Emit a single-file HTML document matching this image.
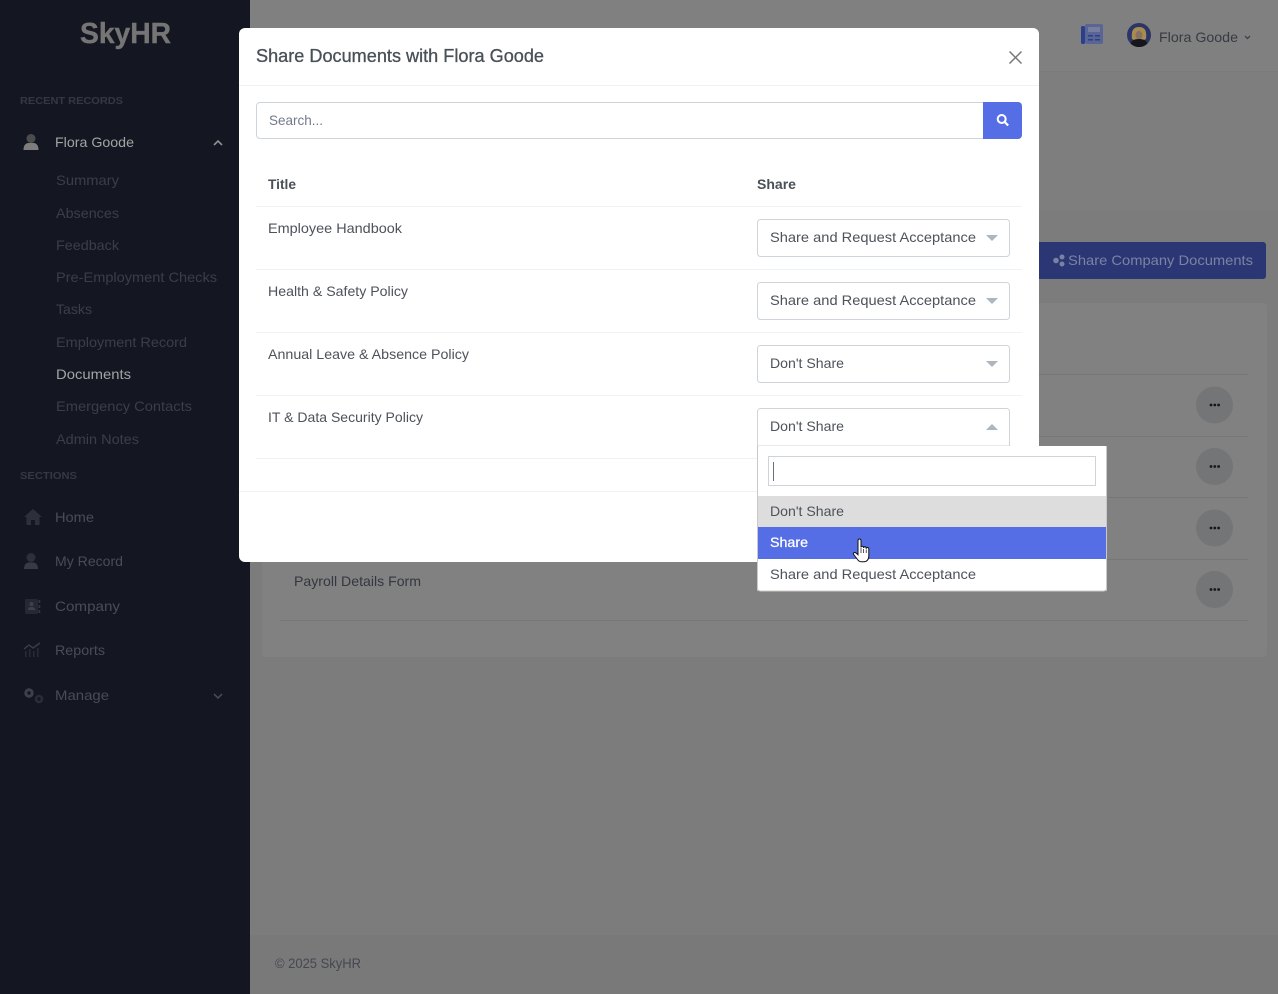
<!DOCTYPE html>
<html lang="en"><head><meta charset="utf-8"><title>Share Documents</title>
<style>
html,body{margin:0;padding:0;background:#7c7c7c;overflow:hidden}
svg{display:block}
text{font-family:"Liberation Sans",sans-serif;font-size:14px;white-space:pre}
.s{fill:#3b3e4a;font-size:14px}
.m{fill:#4a4c55;font-size:14px}
.h{fill:#353843;font-size:10.5px;font-weight:700}
.d{fill:#4d525b;font-size:14px}
.b{fill:#495057;font-size:14px;font-weight:700}
</style></head><body>
<svg xmlns="http://www.w3.org/2000/svg" width="1278" height="994" viewBox="0 0 1278 994">
<!-- page -->
<rect width="1278" height="994" fill="#7c7c7c"/>
<rect x="250" y="0" width="1028" height="71" fill="#808080"/>
<rect x="250" y="71" width="1028" height="1" fill="#7b7b7b"/>
<rect x="250" y="72" width="1028" height="138" fill="#7e7e7e"/>
<rect x="262" y="303" width="1005" height="354" rx="4" fill="#818181"/>
<g fill="#777"><rect x="280" y="374" width="968" height="1"/><rect x="280" y="436" width="968" height="1"/><rect x="280" y="497" width="968" height="1"/><rect x="280" y="559" width="968" height="1"/><rect x="280" y="620" width="968" height="1"/></g>
<rect x="250" y="935" width="1028" height="59" fill="#797979"/>
<text x="294" y="586" textLength="127" lengthAdjust="spacingAndGlyphs" style="fill:#33373f">Payroll Details Form</text>
<g fill="#747577"><circle cx="1214.500" cy="405" r="18.5"/><circle cx="1214.500" cy="466.500" r="18.5"/><circle cx="1214.500" cy="528" r="18.5"/><circle cx="1214.500" cy="589.500" r="18.5"/></g>
<g fill="#15171f"><circle cx="1211" cy="405" r="1.400"/><circle cx="1214.800" cy="405" r="1.400"/><circle cx="1218.600" cy="405" r="1.400"/><circle cx="1211" cy="466.500" r="1.400"/><circle cx="1214.800" cy="466.500" r="1.400"/><circle cx="1218.600" cy="466.500" r="1.400"/><circle cx="1211" cy="528" r="1.400"/><circle cx="1214.800" cy="528" r="1.400"/><circle cx="1218.600" cy="528" r="1.400"/><circle cx="1211" cy="589.500" r="1.400"/><circle cx="1214.800" cy="589.500" r="1.400"/><circle cx="1218.600" cy="589.500" r="1.400"/></g>
<text x="275" y="968" textLength="86" lengthAdjust="spacingAndGlyphs" style="fill:#454851">© 2025 SkyHR</text>
<!-- top bar -->
<rect x="1081" y="26" width="4" height="18" rx="1.500" fill="#2b3f8c"/>
<rect x="1085" y="24" width="18" height="20" rx="2" fill="#586595"/>
<rect x="1088" y="27" width="12" height="5" fill="#767e9e"/>
<g fill="#2d3e88"><rect x="1088" y="35" width="5" height="1.500"/><rect x="1095" y="35" width="5" height="1.500"/><rect x="1088" y="39" width="5" height="1.500"/><rect x="1095" y="39" width="5" height="1.500"/></g>
<circle cx="1139" cy="35" r="12" fill="#2b3566"/>
<path d="M1132 39c-1-8 1-12 7-12s8 4 7 12l-2 1h-10z" fill="#a58c50"/>
<ellipse cx="1139" cy="35" rx="3.500" ry="4.300" fill="#8a7064"/>
<path d="M1130.500 43.500c1-3 4-4.500 8.500-4.500s7.500 1.500 8.500 4.500a12 12 0 0 1-17 0z" fill="#15161b"/>
<text x="1159" y="42" textLength="79" lengthAdjust="spacingAndGlyphs" style="fill:#373a42">Flora Goode</text>
<path d="M1245 36l2.500 2.500 2.500-2.500" fill="none" stroke="#373a42" stroke-width="1.200"/>
<!-- page button -->
<rect x="1000" y="242" width="266" height="37" rx="3" fill="#2b3675"/>
<g fill="#7a82a0"><circle cx="1056" cy="260.500" r="2.800"/><circle cx="1062" cy="257" r="2.500"/><circle cx="1062" cy="264" r="2.500"/></g>
<text x="1068" y="265" textLength="185" lengthAdjust="spacingAndGlyphs" style="fill:#7b83a1">Share Company Documents</text>
<!-- sidebar -->
<rect width="250" height="994" fill="#141721"/>
<text x="80" y="43" textLength="91" lengthAdjust="spacingAndGlyphs" style="font-size:29px;font-weight:700;fill:#757575;stroke:#757575;stroke-width:.4">SkyHR</text>
<text x="20" y="104" textLength="103" lengthAdjust="spacingAndGlyphs" class="h">RECENT RECORDS</text>
<circle cx="31" cy="138.500" r="4.500" fill="#4c4c4c"/>
<path d="M23.500 150c0-4.500 2-7 5-7h5c3 0 5 2.500 5 7z" fill="#7d7d7d"/>
<text x="55" y="147" textLength="79" lengthAdjust="spacingAndGlyphs" style="fill:#a3a3a3">Flora Goode</text>
<path d="M214 145l4-4 4 4" fill="none" stroke="#8f8f8f" stroke-width="1.600"/>
<text class="s" x="56" y="185" textLength="63" lengthAdjust="spacingAndGlyphs">Summary</text>
<text class="s" x="56" y="218" textLength="63" lengthAdjust="spacingAndGlyphs">Absences</text>
<text class="s" x="56" y="250" textLength="63" lengthAdjust="spacingAndGlyphs">Feedback</text>
<text class="s" x="56" y="282" textLength="161" lengthAdjust="spacingAndGlyphs">Pre-Employment Checks</text>
<text class="s" x="56" y="314" textLength="36" lengthAdjust="spacingAndGlyphs">Tasks</text>
<text class="s" x="56" y="347" textLength="131" lengthAdjust="spacingAndGlyphs">Employment Record</text>
<text x="56" y="379" textLength="75" lengthAdjust="spacingAndGlyphs" style="fill:#a3a3a3">Documents</text>
<text class="s" x="56" y="411" textLength="136" lengthAdjust="spacingAndGlyphs">Emergency Contacts</text>
<text class="s" x="56" y="444" textLength="83" lengthAdjust="spacingAndGlyphs">Admin Notes</text>
<text x="20" y="479" textLength="57" lengthAdjust="spacingAndGlyphs" class="h">SECTIONS</text>
<path d="M24 517l9-8 9 8h-2.500v8H35v-5h-4v5h-4.500v-8z" fill="#2d303a"/>
<text class="m" x="55" y="522" textLength="39" lengthAdjust="spacingAndGlyphs">Home</text>
<circle cx="31" cy="557.500" r="4.500" fill="#2d303a"/><path d="M24 569c0-4 2-6.500 5-6.500h4c3 0 5 2.500 5 6.500z" fill="#383b45"/>
<text class="m" x="55" y="566" textLength="68" lengthAdjust="spacingAndGlyphs">My Record</text>
<rect x="25" y="599" width="13" height="15" rx="1.500" fill="#262934"/><circle cx="31.500" cy="604" r="2" fill="#3e414c"/><path d="M28 610c0-2 1-3 3.500-3s3.500 1 3.500 3z" fill="#3e414c"/><g fill="#33363f"><rect x="38.500" y="600" width="1.800" height="3"/><rect x="38.500" y="605" width="1.800" height="3"/><rect x="38.500" y="610" width="1.800" height="3"/></g>
<text class="m" x="55" y="611" textLength="65" lengthAdjust="spacingAndGlyphs">Company</text>
<path d="M24 649l5-4 4 3 7-5" fill="none" stroke="#3b3e48" stroke-width="1.400"/><g fill="#292c37"><rect x="25" y="651" width="1.500" height="6"/><rect x="29" y="649" width="1.500" height="8"/><rect x="33" y="651" width="1.500" height="6"/><rect x="37" y="648" width="1.500" height="9"/></g>
<text class="m" x="55" y="655" textLength="50" lengthAdjust="spacingAndGlyphs">Reports</text>
<circle cx="29" cy="693" r="3.200" fill="none" stroke="#3e414c" stroke-width="3"/><circle cx="39" cy="699" r="3" fill="none" stroke="#2a2d37" stroke-width="2.600"/>
<text class="m" x="55" y="700" textLength="54" lengthAdjust="spacingAndGlyphs">Manage</text>
<path d="M214 694l4 4 4-4" fill="none" stroke="#4b4e58" stroke-width="1.500"/>
<!-- modal -->
<rect x="239" y="28" width="800" height="534" rx="6" fill="#fff"/>
<rect x="239" y="85" width="800" height="1" fill="#eff2f7"/>
<text x="256" y="62" textLength="288" lengthAdjust="spacingAndGlyphs" style="font-size:18px;fill:#495057;stroke:#495057;stroke-width:.3">Share Documents with Flora Goode</text>
<path d="M1009.500 51.500l12 12M1021.500 51.500l-12 12" stroke="#777" stroke-width="1.500" fill="none"/>
<path d="M983 102.500H260a3.500 3.500 0 0 0-3.500 3.500v29a3.500 3.500 0 0 0 3.500 3.500h723" fill="#fff" stroke="#ced4da"/>
<text x="269" y="125" textLength="54" lengthAdjust="spacingAndGlyphs" style="fill:#74788d">Search...</text>
<path d="M983 102h35a4 4 0 0 1 4 4v29a4 4 0 0 1-4 4h-35z" fill="#556ee6"/>
<circle cx="1001.700" cy="119" r="4" fill="none" stroke="#fff" stroke-width="2"/><path d="M1004.700 122l3.500 3.500" stroke="#fff" stroke-width="2.200"/>
<text class="b" x="268" y="189" textLength="28" lengthAdjust="spacingAndGlyphs">Title</text>
<text class="b" x="757" y="189" textLength="39" lengthAdjust="spacingAndGlyphs">Share</text>
<g fill="#eff2f7"><rect x="256" y="206" width="766" height="1"/><rect x="256" y="269" width="766" height="1"/><rect x="256" y="332" width="766" height="1"/><rect x="256" y="395" width="766" height="1"/><rect x="256" y="458" width="766" height="1"/><rect x="239" y="491" width="800" height="1"/></g>
<text class="d" x="268" y="233" textLength="134" lengthAdjust="spacingAndGlyphs">Employee Handbook</text>
<text class="d" x="268" y="296" textLength="140" lengthAdjust="spacingAndGlyphs">Health &amp; Safety Policy</text>
<text class="d" x="268" y="359" textLength="201" lengthAdjust="spacingAndGlyphs">Annual Leave &amp; Absence Policy</text>
<text class="d" x="268" y="422" textLength="155" lengthAdjust="spacingAndGlyphs">IT &amp; Data Security Policy</text>
<g fill="#fff" stroke="#ced4da"><rect x="757.500" y="219.500" width="252" height="37" rx="3"/><rect x="757.500" y="282.500" width="252" height="37" rx="3"/><rect x="757.500" y="345.500" width="252" height="37" rx="3"/><path d="M757.500 446v-34.500a3 3 0 0 1 3-3h246a3 3 0 0 1 3 3V446z"/></g>
<text class="d" x="770" y="242" textLength="206" lengthAdjust="spacingAndGlyphs">Share and Request Acceptance</text>
<text class="d" x="770" y="305" textLength="206" lengthAdjust="spacingAndGlyphs">Share and Request Acceptance</text>
<text class="d" x="770" y="368" textLength="74" lengthAdjust="spacingAndGlyphs">Don't Share</text>
<text class="d" x="770" y="431" textLength="74" lengthAdjust="spacingAndGlyphs">Don't Share</text>
<g fill="#adb5bd"><path d="M986 235h12l-6 6z"/><path d="M986 298h12l-6 6z"/><path d="M986 361h12l-6 6z"/><path d="M986 430h12l-6-6z"/></g>
<!-- dropdown -->
<rect x="757" y="446" width="350" height="145" rx="2" fill="#fff"/>
<path d="M757.500 446v142a3 3 0 0 0 3 3h343a3 3 0 0 0 3-3V446" fill="none" stroke="#c9c9c9"/>
<rect x="768.500" y="456.500" width="327" height="29" fill="#fff" stroke="#ced4da"/>
<rect x="773" y="462" width="1" height="19" fill="#6b6f80"/>
<rect x="758" y="496" width="348" height="31" fill="#ddd"/>
<rect x="758" y="527" width="348" height="32" fill="#556ee6"/>
<text class="d" x="770" y="516" textLength="74" lengthAdjust="spacingAndGlyphs">Don't Share</text>
<text x="770" y="547" textLength="38" lengthAdjust="spacingAndGlyphs" style="fill:#fff;stroke:#fff;stroke-width:.25">Share</text>
<text class="d" x="770" y="579" textLength="206" lengthAdjust="spacingAndGlyphs">Share and Request Acceptance</text>
<!-- hand cursor -->
<path d="M858 540.500a1.500 1.500 0 0 1 3 0V547.500a1.300 1.300 0 0 1 2.600 0v.5a1.300 1.300 0 0 1 2.600 0v.8a1.300 1.300 0 0 1 2.600 0V556c0 3.500-2 5.800-4.800 5.800h-2.500c-1.800 0-3-.8-4-2.300l-3.800-5c-1-1.400.9-2.700 2-1.700l2.300 2z" fill="#fff" stroke="#111" stroke-width="1"/>
<path d="M861 548v5M863.600 549v4M866.200 549.500v3.500" stroke="#111" stroke-width=".7" fill="none"/>
</svg>
</body></html>
